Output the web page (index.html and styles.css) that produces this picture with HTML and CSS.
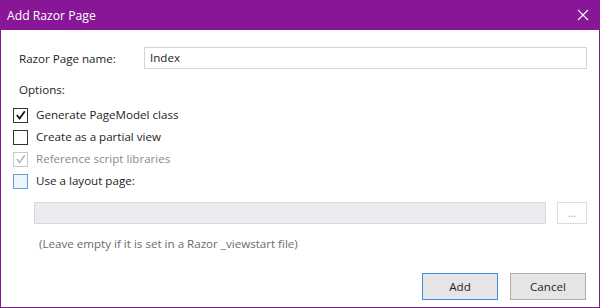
FILE: index.html
```html
<!DOCTYPE html>
<html>
<head>
<meta charset="utf-8">
<link rel="stylesheet" href="styles.css">
</head>
<body>
<div class="window">
  <div class="titlebar">
    <span class="title">Add Razor Page</span>
    <svg class="close" width="12" height="12" viewBox="0 0 12 12"><path d="M1 1 L11 11 M11 1 L1 11" stroke="#fff" stroke-width="1.1" fill="none"/></svg>
  </div>
  <div class="content">
    <div class="name-row">
      <label class="name-label">Razor Page name:</label>
      <div class="textbox">Index</div>
    </div>
    <div class="options-label">Options:</div>
    <div class="check-row">
      <span class="box checked"><svg width="13" height="13" viewBox="0 0 13 13"><path d="M2.8 6 L5.6 9.6 L10.8 2.2" stroke="#111" stroke-width="1.7" fill="none"/></svg></span>
      <span class="check-text">Generate PageModel class</span>
    </div>
    <div class="check-row">
      <span class="box"></span>
      <span class="check-text">Create as a partial view</span>
    </div>
    <div class="check-row">
      <span class="box disabled"><svg width="13" height="13" viewBox="0 0 13 13"><path d="M2.8 6 L5.6 9.6 L10.8 2.2" stroke="#b4b4b4" stroke-width="1.5" fill="none"/></svg></span>
      <span class="check-text muted">Reference script libraries</span>
    </div>
    <div class="check-row">
      <span class="box hover"></span>
      <span class="check-text">Use a layout page:</span>
    </div>
    <div class="layout-row">
      <div class="layout-input"></div>
      <div class="browse">...</div>
    </div>
    <div class="hint">(Leave empty if it is set in a Razor _viewstart file)</div>
    <div class="buttons">
      <div class="btn default">Add</div>
      <div class="btn">Cancel</div>
    </div>
  </div>
</div>
</body>
</html>
```
FILE: styles.css
```css
html, body { margin: 0; padding: 0; background: #fff; }
body { font-family: "Open Sans", "Noto Sans", sans-serif; font-size: 11.6px; color: #1e1e1e; }
.window {
  width: 600px; height: 308px; box-sizing: border-box;
  border: 1px solid #871797; border-top: 0;
  display: flex; flex-direction: column;
}
.titlebar {
  height: 30px; flex: none; background: #871797; color: #fff;
  display: flex; align-items: center; justify-content: space-between;
  padding: 0 11px 0 7px; margin: 0 -1px;
}
.title { font-size: 12.2px; }
.close { display: block; }
.content {
  flex: 1; display: flex; flex-direction: column;
  padding: 0 12px 7px 12px;
}
.name-row { display: flex; align-items: center; margin-top: 17px; height: 22px; }
.name-label { width: 125px; padding-left: 6px; flex: none; }
.textbox {
  flex: 1; height: 22px; box-sizing: border-box; border: 1px solid #d4d4dc;
  padding: 0 5px; line-height: 20px; color: #1e1e1e;
}
.options-label { margin-top: 13px; margin-bottom: 6px; padding-left: 6px; line-height: 16px; }
.check-row { display: flex; align-items: center; height: 22px; }
.box {
  width: 15px; height: 15px; box-sizing: border-box; border: 1px solid #333;
  background: #fff; display: flex; align-items: center; justify-content: center;
  margin-right: 8px; flex: none;
}
.box svg { display: block; }
.box.disabled { border-color: #c8c8c8; }
.box.hover { border-color: #5b9fdd; background: #edf4fc; }
.check-text { line-height: 16px; }
.muted { color: #8a8a8a; }
.layout-row { display: flex; margin-top: 10px; padding-left: 21px; height: 22px; }
.layout-input { flex: 1; box-sizing: border-box; border: 1px solid #d8d8e0; background: #ececf0; }
.browse {
  width: 30px; margin-left: 11px; box-sizing: border-box; border: 1px solid #dcdcdc;
  background: #fff; color: #a0a0a0; font-size: 10px; text-align: center; line-height: 20px;
}
.hint { margin-top: 12px; padding-left: 26px; color: #6b6b6b; line-height: 16px; }
.buttons { margin-top: auto; display: flex; justify-content: flex-end; gap: 12px; padding-right: 1px; }
.btn {
  width: 76px; height: 27px; box-sizing: border-box; border: 1px solid #adadad;
  background: #e5e5e5; text-align: center; line-height: 25px; color: #1e1e1e;
}
.btn.default { border-color: #3c8fdc; }
```
